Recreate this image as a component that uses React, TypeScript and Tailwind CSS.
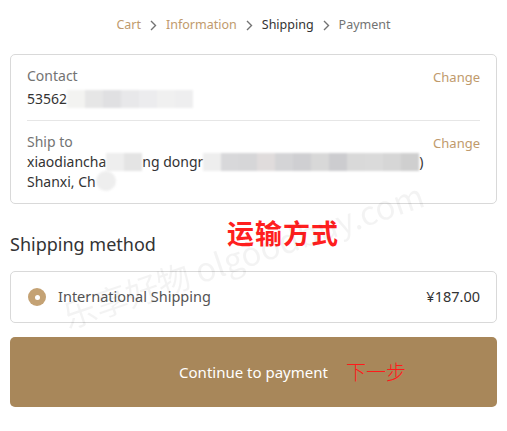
import React from "react";

const font = {
  fontFamily: '"Noto Sans", "Noto Sans CJK SC", sans-serif',
};

function Mosaic({ cells, h = 18 }: { cells: string[]; h?: number }) {
  return (
    <span className="inline-flex shrink-0 align-middle blur-[1px]" style={{ height: h }}>
      {cells.map((c, i) => (
        <span key={i} className="inline-block w-[18px] h-full" style={{ background: c }} />
      ))}
    </span>
  );
}

export default function App() {
  return (
    <main className="relative w-[507px] h-[431px] bg-white overflow-hidden" style={font}>
      <div className="px-[10px]">
        {/* breadcrumb */}
        <nav className="flex items-center justify-center gap-[8px] h-[48px] pt-[2px] text-[12.5px]">
          <span className="text-[#c09a6c]">Cart</span>
          <Chevron />
          <span className="text-[#c09a6c]">Information</span>
          <Chevron />
          <span className="text-[#333]">Shipping</span>
          <Chevron />
          <span className="text-[#737373]">Payment</span>
        </nav>

        {/* contact / ship to */}
        <div className="mt-[6px] border border-[#d9d9d9] rounded-[5px] px-[16px]">
          <div className="flex justify-between pt-[10px] pb-[10px] border-b border-[#e6e6e6]">
            <div>
              <div className="text-[14px] text-[#737373] leading-[22px]">Contact</div>
              <div className="text-[14px] text-[#333] leading-[22px] mt-[1px] flex items-center whitespace-nowrap">
                53562
                <Mosaic cells={["#f3f3f1", "#e6e6e6", "#e0e0e2", "#e8e8ea", "#ececee", "#f0f0f0", "#eeeeef"]} />
              </div>
            </div>
            <span className="shrink-0 text-[13px] text-[#c09a6c] leading-[22px] mt-[1px]">Change</span>
          </div>
          <div className="flex justify-between pt-[10px] pb-[12px]">
            <div>
              <div className="text-[14px] text-[#737373] leading-[22px]">Ship to</div>
              <div className="text-[14px] text-[#333] leading-[19px] mt-[-1px] whitespace-nowrap">
                <div className="flex items-center">
                  xiaodiancha
                  <Mosaic cells={["#eeeeee", "#e4e4e4"]} />
                  ng dongr
                  <Mosaic
                    cells={["#eeeeee", "#d8d8da", "#d6d6d8", "#e0dcdc", "#d4d4d6", "#cfcfd2", "#d8d8d8", "#cccccf", "#d9d9d9", "#dadada", "#d6d6d6", "#cfcfcf"]}
                  />
                  )
                </div>
                <div className="flex items-center">
                  Shanxi, Ch
                  <span className="inline-block w-[20px] h-[20px] rounded-full bg-[#eeeeee] blur-[1px]" />
                </div>
              </div>
            </div>
            <span className="shrink-0 text-[13px] text-[#c09a6c] leading-[22px] mt-[1px]">Change</span>
          </div>
        </div>

        {/* shipping method */}
        <h2 className="text-[18px] text-[#333] leading-[24px] mt-[28px]">Shipping method</h2>

        <div className="mt-[15px] h-[52px] border border-[#d9d9d9] rounded-[5px] flex items-center px-[16px] text-[14.5px] text-[#545454]">
          <span className="w-[18px] h-[18px] rounded-full bg-[#c4a274] flex items-center justify-center mr-[12px] ml-[1px]">
            <span className="w-[5px] h-[5px] rounded-full bg-white" />
          </span>
          <span className="flex-1">International Shipping</span>
          <span className="text-[#333]">¥187.00</span>
        </div>

        <button className="mt-[14px] w-full h-[70px] rounded-[5px] bg-[#a8875a] text-white text-[15px] flex items-center justify-center relative">
          Continue to payment
          <span
            className="absolute left-[336px] top-[21px] text-[20px] text-[#ff1a1a] font-light leading-[28px]"
            style={{ fontFamily: '"Noto Sans CJK SC", sans-serif' }}
          >
            下一步
          </span>
        </button>
      </div>

      {/* red annotation */}
      <span
        className="absolute left-[227px] top-[215px] text-[27px] font-bold text-[#ff1f1f] leading-[36px] tracking-[1px]"
        style={{ fontFamily: '"Noto Sans CJK SC", sans-serif' }}
      >
        运输方式
      </span>

      {/* watermark */}
      <span
        className="absolute left-[64px] top-[292px] text-[33px] text-[#000] opacity-[0.045] whitespace-nowrap pointer-events-none origin-left -rotate-[19deg]"
        style={{ fontFamily: '"Noto Sans CJK SC", sans-serif' }}
      >
        乐享好物 olgoodbuy.com
      </span>
    </main>
  );
}

function Chevron() {
  return (
    <svg width="9" height="11" viewBox="0 0 9 11" fill="none" className="text-[#737373]">
      <path d="M2 1l4.5 4.5L2 10" stroke="currentColor" strokeWidth="1.4" />
    </svg>
  );
}
